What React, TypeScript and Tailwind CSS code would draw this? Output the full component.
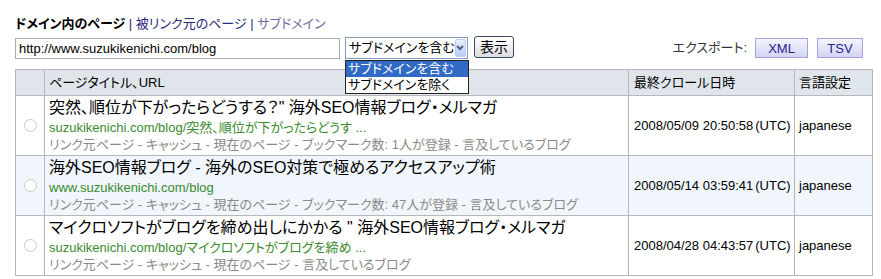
import React from 'react';

const font = { fontFamily: '"Liberation Sans", "Noto Sans CJK JP", sans-serif' };

interface Row {
  title: string;
  url: string;
  bookmarks?: string;
  crawled: string;
  lang: string;
}

const rows: Row[] = [
  {
    title: '突然、順位が下がったらどうする？" 海外SEO情報ブログ・メルマガ',
    url: 'suzukikenichi.com/blog/突然、順位が下がったらどうす ...',
    bookmarks: '1人が登録',
    crawled: '2008/05/09 20:50:58',
    lang: 'japanese',
  },
  {
    title: '海外SEO情報ブログ - 海外のSEO対策で極めるアクセスアップ術',
    url: 'www.suzukikenichi.com/blog',
    bookmarks: '47人が登録',
    crawled: '2008/05/14 03:59:41',
    lang: 'japanese',
  },
  {
    title: 'マイクロソフトがブログを締め出しにかかる " 海外SEO情報ブログ・メルマガ',
    url: 'suzukikenichi.com/blog/マイクロソフトがブログを締め ...',
    crawled: '2008/04/28 04:43:57',
    lang: 'japanese',
  },
];

function LinksLine({ bookmarks }: { bookmarks?: string }) {
  return (
    <div className="text-[13px] leading-[17px] text-[#8a8a8a] whitespace-nowrap">
      リンク元ページ - キャッシュ - 現在のページ -{' '}
      {bookmarks && <>ブックマーク数: {bookmarks} - </>}
      言及しているブログ
    </div>
  );
}

export default function App() {
  return (
    <div className="w-[881px] h-[279px] bg-white overflow-hidden text-black [font-feature-settings:'palt']" style={font}>
      <div className="pl-[15px] pt-[16px] text-[13px] leading-[16px] whitespace-nowrap">
        <span className="font-bold">ドメイン内のページ</span>
        <span className="text-[#2a2a7a]"> | 被リンク元のページ | </span>
        <span className="text-[#6b6b9e]">サブドメイン</span>
      </div>

      <div className="flex items-start mt-[6px] pl-[15px] pr-[18px]">
        <div className="w-[325px] h-[21px] border border-[#a5acb5] flex items-center pl-[3px] text-[13px]">
          http://www.suzukikenichi.com/blog
        </div>

        <div className="relative ml-[5px] mt-[-1px]">
          <div className="w-[123px] h-[22px] border border-[#7f9db9] flex items-center pl-[3px] text-[13px] bg-white whitespace-nowrap">
            <span className="flex-1">サブドメインを含む</span>
            <span className="w-[15px] h-[18px] mr-[1px] bg-gradient-to-b from-[#e6eefc] to-[#b9cdf5] border border-[#b9cdf5] rounded-[2px] flex items-center justify-center">
              <svg width="8" height="6" viewBox="0 0 8 6">
                <path d="M1 1 L4 4 L7 1" fill="none" stroke="#4d6185" strokeWidth="2" />
              </svg>
            </span>
          </div>
          <div className="absolute left-0 top-[23px] w-[124px] border border-[#222] bg-white text-[13px] leading-[16px] z-10 whitespace-nowrap">
            <div className="bg-[#316ac5] text-white pl-[2px]">サブドメインを含む</div>
            <div className="pl-[2px]">サブドメインを除く</div>
          </div>
        </div>

        <button className="ml-[6px] mt-[-2px] h-[22px] px-[5px] border border-[#3c4a66] rounded-[3px] bg-gradient-to-b from-white to-[#dcdce4] text-[14px] leading-[18px]">
          表示
        </button>

        <div className="ml-auto flex items-center gap-[9px]">
          <span className="text-[13px] text-[#333] mr-[-1px]">エクスポート:</span>
          <button className="w-[53px] h-[20px] border border-[#a3a3d9] bg-gradient-to-b from-[#f4f4ff] to-[#d4d4f4] text-[13px] text-[#24248a]">
            XML
          </button>
          <button className="w-[46px] h-[20px] border border-[#a3a3d9] bg-gradient-to-b from-[#f4f4ff] to-[#d4d4f4] text-[13px] text-[#24248a]">
            TSV
          </button>
        </div>
      </div>

      <table className="ml-[15px] mt-[10px] w-[857px] border-collapse table-fixed">
        <colgroup>
          <col className="w-[29px]" />
          <col className="w-[584px]" />
          <col className="w-[166px]" />
          <col className="w-[78px]" />
        </colgroup>
        <thead>
          <tr className="bg-[#dfe5eb] h-[26px] text-[13px]">
            <th className="border border-[#b4b8bc]"></th>
            <th className="border border-[#b4b8bc] text-left font-normal pl-[4px]">ページタイトル、URL</th>
            <th className="border border-[#b4b8bc] text-left font-normal pl-[5px]">最終クロール日時</th>
            <th className="border border-[#b4b8bc] text-left font-normal pl-[4px]">言語設定</th>
          </tr>
        </thead>
        <tbody>
          {rows.map((r, i) => (
            <tr key={i} className={`h-[60px] ${i === 1 ? 'bg-[#f0f6fb]' : 'bg-white'}`}>
              <td className="border border-[#b4b8bc] text-center align-middle">
                <span className="inline-block w-[13px] h-[13px] rounded-full border border-[#c8c8c8] bg-white mt-[6px]"></span>
              </td>
              <td className="border border-[#b4b8bc] align-top pl-[4px] pt-[1px] overflow-hidden">
                <div className="text-[16px] leading-[22px] whitespace-nowrap">{r.title}</div>
                <div className="text-[13px] leading-[17px] text-[#3b8a2e] whitespace-nowrap">{r.url}</div>
                <LinksLine bookmarks={r.bookmarks} />
              </td>
              <td className="border border-[#b4b8bc] align-middle pl-[5px] text-[13px] whitespace-nowrap">
                {r.crawled}
                <span className="ml-[2px]">(UTC)</span>
              </td>
              <td className="border border-[#b4b8bc] align-middle pl-[4px] text-[13px]">{r.lang}</td>
            </tr>
          ))}
        </tbody>
      </table>
    </div>
  );
}
